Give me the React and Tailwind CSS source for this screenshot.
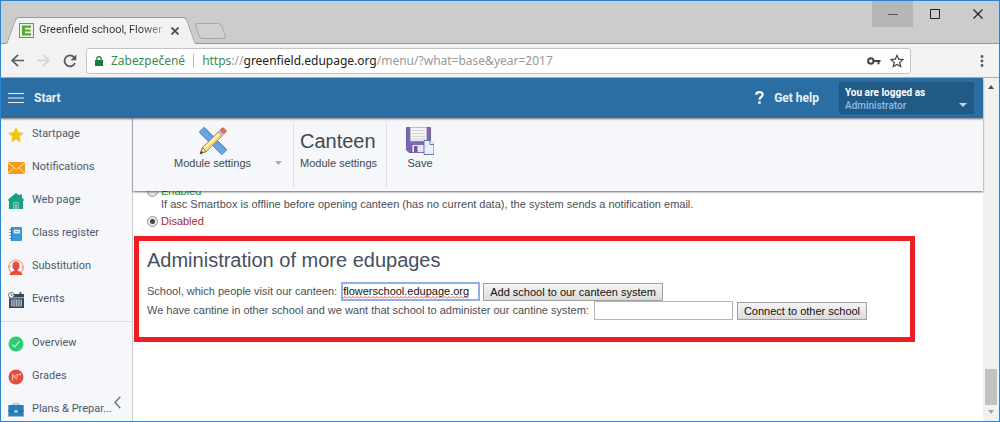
import React, { useState } from "react";

const stroke = { fill: "none", stroke: "currentColor" };

/* ---------- sidebar icons, 16 x 16 ---------- */

const StarIcon = () => (
  <svg viewBox="0 0 16 16" className="size-4 shrink-0">
    <path d="M8 0l2.3 5.3 5.7.5-4.3 3.8 1.3 5.9L8 12.4l-5 3.1 1.3-5.9L0 5.8l5.7-.5z" fill="#f1c40f" />
  </svg>
);

const MailIcon = () => (
  <svg viewBox="0 0 17 12" className="h-3 w-[17px] shrink-0">
    <rect width="17" height="12" fill="#f39c12" />
    <path d="M0 .5l8.5 7L17 .5M0 11.5l6-5.8M17 11.5l-6-5.8" fill="none" stroke="#fdebd0" strokeWidth="1" />
  </svg>
);

const HouseIcon = () => (
  <svg viewBox="0 0 16 16" className="size-4 shrink-0">
    <path d="M8 0l3.5 2.5V1.5H14v3l1.7 1.8V8H.3V6.3z" fill="#16a085" />
    <path d="M1 7h14v9H1z" fill="#16a085" />
    <path d="M5.7 16V9.5h4.6V16M7.3 16v-4.5h1.4V16" fill="none" stroke="#a2d9ce" strokeWidth=".8" />
  </svg>
);

const BookIcon = () => (
  <svg viewBox="0 0 16 16" className="size-4 shrink-0">
    <rect x="3" y="1" width="11" height="14" rx="1" fill="#3498db" />
    <path d="M3.6 1v14" stroke="#2475ad" strokeWidth=".8" />
    <path d="M1.5 3.5h2M1.5 6.5h2M1.5 9.5h2M1.5 12.5h2" stroke="#2980b9" />
    <rect x="5.8" y="3.8" width="6" height="3.6" fill="#eaf4fb" />
    <path d="M7 5.6h3.6" stroke="#3498db" strokeWidth=".8" />
  </svg>
);

const PersonIcon = () => (
  <svg viewBox="0 0 16 16" className="size-4 shrink-0">
    <path d="M2.6 13A7.2 7.2 0 1 1 13.4 13" fill="none" stroke="#e98b80" strokeWidth="1" />
    <path d="M.4 6.2l1 2.4 1.8-1.8M15.6 9.6l-1-2.2-1.8 1.6" fill="none" stroke="#e98b80" strokeWidth=".8" />
    <ellipse cx="8" cy="6.8" rx="3.5" ry="4.4" fill="#e74c3c" />
    <path d="M6.5 9h3v2.6l4 1.6.8 2.8H1.7l.8-2.8 4-1.6z" fill="#e74c3c" />
  </svg>
);

const EventsIcon = () => (
  <svg viewBox="0 0 16 16" className="size-4 shrink-0">
    <path d="M2 2h14v14H1V5z" fill="#34495e" />
    <path d="M1 5.8h15" stroke="#f5f7fa" strokeWidth=".7" />
    <path d="M12.5 0v3.5" stroke="#34495e" strokeWidth="1.6" />
    <circle cx="3.3" cy="3.3" r="2.8" fill="#f5f7fa" stroke="#5d6d7e" strokeWidth="1" />
    <path d="M3.3 1.8v1.7h1.3" fill="none" stroke="#34495e" strokeWidth=".7" />
    <path d="M3.5 8h10v6h-10zM3.5 10h10M3.5 12h10M6 8v6M8.5 8v6M11 8v6" fill="none" stroke="#d5dbe1" strokeWidth=".7" />
  </svg>
);

const CheckIcon = () => (
  <svg viewBox="0 0 16 16" className="size-4 shrink-0">
    <circle cx="8" cy="8" r="7.5" fill="#2ecc71" />
    <path d="M4.4 8.6l2.3 2.2 4.8-5.4" fill="none" stroke="#d5f5e3" strokeWidth="1.1" />
  </svg>
);

const GradesIcon = () => (
  <svg viewBox="0 0 16 16" className="size-4 shrink-0">
    <circle cx="8" cy="8" r="7.5" fill="#e74c3c" />
    <path d="M4.5 11.500V5l4 5.500M4.500 9l5.500-4-1.500 4.500M10.800 5.500h2.400M12 4.300v2.400" fill="none" stroke="#f9d3ce" strokeWidth=".8" />
  </svg>
);

const BriefcaseIcon = () => (
  <svg viewBox="0 0 16 16" className="size-4 shrink-0">
    <path d="M5 3.5V1.8h6v1.7" fill="none" stroke="#7fb3d5" strokeWidth="1" />
    <rect x=".3" y="3" width="15.4" height="11.5" rx=".6" fill="#2980b9" />
    <path d="M.3 8.4c3 1 5 1 7.7 1s4.700 0 7.700-1" fill="none" stroke="#1d5f8c" strokeWidth=".8" />
    <rect x="6.400" y="8.300" width="3.200" height="2.200" rx=".6" fill="#d4e6f1" />
  </svg>
);

/* ---------- ribbon icons ---------- */

const RulerPencilIcon = () => (
  <svg viewBox="0 0 28 28" className="size-7">
    <g transform="rotate(45 14 14)">
      <rect x="-2" y="10.500" width="32" height="7" fill="#6aa5e8" stroke="#3f78c4" strokeWidth=".8" />
      <path d="M1 10.500v3M4 10.500v2M7 10.500v3M10 10.500v2M13 10.500v3M16 10.500v2M19 10.500v3M22 10.500v2M25 10.500v3M28 10.500v2" stroke="#4c86cf" strokeWidth=".7" />
    </g>
    <g transform="rotate(-45 14 14)">
      <path d="M2 11.200h22v5.600H2l-6-2.800z" fill="#fbe38a" stroke="#8a6d2a" strokeWidth=".7" />
      <path d="M2 11.200v5.600l-6-2.800z" fill="#f0cfa0" stroke="#6b5427" strokeWidth=".6" />
      <path d="M-1.500 12.700v2.600l-2.700-1.300z" fill="#333" />
      <path d="M3 13h21" stroke="#fff3bf" strokeWidth="1.200" />
      <path d="M3 15.700h21" stroke="#efd06a" strokeWidth="1" />
      <rect x="24" y="11.200" width="2.500" height="5.600" fill="#c7ccd4" stroke="#8c929b" strokeWidth=".5" />
      <rect x="26.500" y="11.200" width="4.200" height="5.600" rx="1.500" fill="#ee6a62" stroke="#b9443f" strokeWidth=".6" />
    </g>
  </svg>
);

const FloppyIcon = () => (
  <svg viewBox="0 0 28 28" className="size-7">
    <path d="M.5.500h24v25H3L.500 23z" fill="#7d66b5" stroke="#5f4a96" strokeWidth=".8" />
    <rect x="4.500" y=".500" width="16" height="13.500" fill="#f4f4f6" stroke="#c6c4d2" strokeWidth=".6" />
    <path d="M6 3.500h13M6 6.500h13M6 9.500h13M6 12h13" stroke="#c9cbd0" strokeWidth=".8" />
    <rect x="6" y="17.500" width="13" height="8" fill="#e8e6ee" stroke="#5f4a96" strokeWidth=".6" />
    <rect x="8" y="19" width="3.500" height="6" fill="#6d57a6" />
    <path d="M18 13.500h6l4 4v10H18z" fill="#e7f0fb" stroke="#4f6f9c" strokeWidth=".9" />
    <path d="M24 13.500v4h4" fill="#fff" stroke="#4f6f9c" strokeWidth=".9" />
  </svg>
);

/* ---------- browser chrome ---------- */

function TitleBar() {
  return (
    <div className="flex h-[43px] shrink-0 items-start justify-between border-b border-[#999] bg-[#ccc]">
      <div className="flex items-end self-end pl-[10px]">
        <div className="relative z-0 -mb-px flex h-[27px] w-[180px] items-center gap-[5px] pr-3 pl-2 before:absolute before:inset-y-0 before:left-0 before:-z-10 before:w-1/2 before:-skew-x-[20deg] before:rounded-tl-sm before:border-t before:border-l before:border-[#999] before:bg-[#f2f2f2] after:absolute after:inset-y-0 after:right-0 after:-z-10 after:w-1/2 after:skew-x-[20deg] after:rounded-tr-sm after:border-t after:border-r after:border-[#999] after:bg-[#f2f2f2]">
          <span className="absolute inset-x-7 top-px bottom-0 -z-10 bg-[#f2f2f2]" />
          <svg viewBox="0 0 15 15" className="size-[15px] shrink-0">
            <rect x=".5" y=".5" width="14" height="14" fill="#e8f3e0" stroke="#4a90d9" />
            <path d="M3 2.500h9v2.300H6v1.600h5.500v2.200H6v1.700h6v2.200H3z" fill="#5aa82b" />
          </svg>
          <span className="flex-1 bg-linear-to-r from-[#333] from-80% to-[#bbb] bg-clip-text font-['Segoe_UI',Roboto,sans-serif] text-[11px] whitespace-nowrap text-transparent">
            Greenfield school, Flower
          </span>
          <button type="button" aria-label="Close tab" className="text-[#444]">
            <svg viewBox="0 0 8 8" className="size-2">
              <path d="M.5.500l7 7M7.500.500l-7 7" {...stroke} strokeWidth="1.600" />
            </svg>
          </button>
        </div>
        <button
          type="button"
          aria-label="New tab"
          className="mb-1 ml-[6px] h-4 w-[27px] skew-x-[20deg] rounded-[3px] border border-[#aaa] bg-[#d0d0d0]"
        />
      </div>
      <div className="flex h-[26px] text-[#222]">
        <button type="button" aria-label="Minimize" className="grid w-[41px] place-items-center bg-[#b6b6b6] text-[#555]">
          <svg viewBox="0 0 10 10" className="size-[10px]"><path d="M0 5.500h10" {...stroke} /></svg>
        </button>
        <button type="button" aria-label="Maximize" className="grid w-[43px] place-items-center">
          <svg viewBox="0 0 10 10" className="size-[10px]"><path d="M.5.500h9v9h-9z" {...stroke} /></svg>
        </button>
        <button type="button" aria-label="Close" className="grid w-[43px] place-items-center">
          <svg viewBox="0 0 10 10" className="size-[10px]"><path d="M.5.500l9 9M9.500.500l-9 9" {...stroke} strokeWidth="1.200" /></svg>
        </button>
      </div>
    </div>
  );
}

function AddressBar() {
  return (
    <div className="flex h-[34px] shrink-0 items-center border-b border-[#b0b0b0] bg-[#f2f2f2] pr-[15px] pl-[10px]">
      <div className="flex items-center gap-[13px] text-[#555a60]">
        <button type="button" aria-label="Back">
          <svg viewBox="0 0 13 13" className="size-[13px]"><path d="M13 6.500H1.500M7 .8L1.200 6.500 7 12.200" {...stroke} strokeWidth="1.700" /></svg>
        </button>
        <button type="button" aria-label="Forward" className="text-[#d0d0d0]">
          <svg viewBox="0 0 13 13" className="size-[13px]"><path d="M0 6.500h11.500M6 .8l5.800 5.700L6 12.200" {...stroke} strokeWidth="1.500" /></svg>
        </button>
        <button type="button" aria-label="Reload">
          <svg viewBox="0 0 14 14" className="size-[14px]">
            <path d="M12 9.200A5.500 5.500 0 1 1 11.200 3.300" {...stroke} strokeWidth="1.800" />
            <path d="M13.300.500v5.800H7.600z" fill="currentColor" />
          </svg>
        </button>
      </div>
      <div className="ml-[9px] flex h-[26px] flex-1 items-center rounded-[3px] border border-[#c4c4c4] bg-white pr-[6px] pl-2 font-['Noto_Sans',sans-serif] text-[12px]">
        <svg viewBox="0 0 8 10" className="h-[10px] w-2 text-[#188038]">
          <path d="M0 4h8v6H0z" fill="currentColor" />
          <path d="M1.800 4.500V2.800a2.200 2.200 0 0 1 4.400 0v1.700" {...stroke} strokeWidth="1.200" />
        </svg>
        <span className="ml-2 text-[#3a8a52]">Zabezpečené</span>
        <span className="mx-2 h-[14px] w-px bg-[#bbb]" />
        <span className="flex-1 whitespace-nowrap text-[#999]">
          <span className="text-[#3a8a52]">https</span>://<span className="text-[#222]">greenfield.edupage.org</span>
          /menu/?what=base&amp;year=2017
        </span>
        <button type="button" aria-label="Saved password" className="text-[#444]">
          <svg viewBox="0 0 14 8" className="h-2 w-[14px]">
            <circle cx="3.800" cy="4" r="2.700" {...stroke} strokeWidth="2" />
            <path d="M6.500 4H13.500M11.500 4v3.300" {...stroke} strokeWidth="2" />
          </svg>
        </button>
        <button type="button" aria-label="Bookmark this page" className="ml-[9px] text-[#444]">
          <svg viewBox="0 0 14 14" className="size-[14px]">
            <path d="M7 1.300l1.700 3.900 4.200.4-3.200 2.800 1 4.200L7 10.400l-3.700 2.200 1-4.200L1.100 5.600l4.200-.4z" {...stroke} strokeWidth="1.200" />
          </svg>
        </button>
      </div>
      <button type="button" aria-label="Browser menu" className="ml-[69px] text-[#555]">
        <svg viewBox="0 0 4 12" className="h-3 w-1" fill="currentColor">
          <circle cx="2" cy="1.500" r="1.400" /><circle cx="2" cy="6" r="1.400" /><circle cx="2" cy="10.500" r="1.400" />
        </svg>
      </button>
    </div>
  );
}

/* ---------- application ---------- */

function AppHeader() {
  return (
    <header className="relative z-20 flex h-10 shrink-0 items-center bg-[#2b6ea3] pr-[9px] pb-px pl-[7px] font-[Roboto,sans-serif] font-bold text-[#e8f1f8] shadow-[0_1px_2px_rgba(0,0,0,0.55)]">
      <button type="button" className="flex items-center gap-[10px] text-[12px]">
        <svg viewBox="0 0 16 12" className="h-3 w-4"><path d="M0 1.500h16M0 6h16M0 10.500h16" {...stroke} strokeWidth="1.200" /></svg>
        Start
      </button>
      <a href="#help" className="mr-5 ml-auto flex items-center gap-[10px] text-[12px]">
        <svg viewBox="0 0 9 13" className="h-[13px] w-[9px] text-white">
          <path d="M1.200 3.800C1.200 2.200 2.500 1.200 4.400 1.200S7.700 2.200 7.700 3.700C7.700 5.800 4.500 6 4.500 8.800" {...stroke} strokeWidth="2.200" />
          <rect x="3.300" y="10.400" width="2.400" height="2.400" fill="currentColor" />
        </svg>
        Get help
      </a>
      <button
        type="button"
        className="flex h-8 w-[135px] items-end justify-between rounded-[2px] border border-[#1f5580] bg-[#225a86] pr-[6px] pl-[5px] text-left text-[10px] leading-[13px]"
      >
        <span className="pb-px">
          <span className="block text-white">You are logged as</span>
          <span className="block font-medium text-[#8dbbe3]">Administrator</span>
        </span>
        <svg viewBox="0 0 8 4" className="mb-[6px] h-1 w-2"><path d="M0 0h8L4 4z" fill="#c9d6e2" /></svg>
      </button>
    </header>
  );
}

const primary = [
  ["Startpage", StarIcon],
  ["Notifications", MailIcon],
  ["Web page", HouseIcon],
  ["Class register", BookIcon],
  ["Substitution", PersonIcon],
  ["Events", EventsIcon],
];

const secondary = [
  ["Overview", CheckIcon],
  ["Grades", GradesIcon],
  ["Plans & Prepar...", BriefcaseIcon],
];

function NavList({ items }) {
  return (
    <ul>
      {items.map(([label, Icon]) => (
        <li key={label}>
          <a href="#nav" className="flex h-[33px] items-center whitespace-nowrap">
            <span className="flex w-6 shrink-0 items-center">
              <Icon />
            </span>
            {label}
          </a>
        </li>
      ))}
    </ul>
  );
}

function Sidebar() {
  return (
    <nav className="relative w-[132px] shrink-0 overflow-hidden border-r border-[#c8cbd0] bg-[#f5f7fa] font-[Roboto,sans-serif] text-[11px] text-[#4f586a]">
      <div className="pl-[7px]">
        <NavList items={primary} />
      </div>
      <hr className="mt-[5px] mb-[5px] border-[#d9dce1]" />
      <div className="pl-[7px]">
        <NavList items={secondary} />
      </div>
      <button type="button" aria-label="Collapse menu" className="absolute right-[11px] bottom-3 text-[#6b7280]">
        <svg viewBox="0 0 7 13" className="h-[13px] w-[7px]"><path d="M6.300.8L1 6.500l5.300 5.700" {...stroke} strokeWidth="1.400" /></svg>
      </button>
    </nav>
  );
}

function Ribbon() {
  return (
    <div className="relative z-10 flex h-[73px] shrink-0 bg-[#f5f7fa] py-1 text-[#3f4854] shadow-[0_1px_2px_rgba(0,0,0,0.6)]">
      <div className="flex w-[161px] items-start border-r border-[#dcdfe3] pt-[5px]">
        <button type="button" className="ml-[41px] flex flex-col items-center whitespace-nowrap">
          <RulerPencilIcon />
          <span>Module settings</span>
        </button>
        <button type="button" aria-label="More module settings" className="mt-[34px] ml-6">
          <svg viewBox="0 0 7 4" className="h-1 w-[7px]"><path d="M0 0h7L3.500 4z" fill="#aaa" /></svg>
        </button>
      </div>
      <div className="w-[93px] border-r border-[#dcdfe3] pt-[5px] pl-[6px] whitespace-nowrap">
        <h1 className="text-[20px] leading-7">Canteen</h1>
        <p>Module settings</p>
      </div>
      <button type="button" className="ml-[19px] flex flex-col items-center self-start pt-[5px]">
        <FloppyIcon />
        <span>Save</span>
      </button>
    </div>
  );
}

function Radio({ label, color, checked, onChange }) {
  return (
    <label className={`flex w-fit items-center gap-[3px] ${color}`}>
      <input
        type="radio"
        name="offline-mail"
        checked={checked}
        onChange={onChange}
        className="size-[11px] appearance-none rounded-full border border-[#999] bg-[#e6e6e6] checked:bg-[radial-gradient(circle,#444_0_2px,#e6e6e6_3px)]"
      />
      {label}
    </label>
  );
}

const buttonClass =
  "h-[18px] border border-[#a0a0a0] bg-linear-to-b from-[#f4f4f4] to-[#dcdcdc] px-[6px] leading-4 whitespace-nowrap text-[#111]";

const Squiggle = () => (
  <svg aria-hidden="true" className="pointer-events-none absolute bottom-[2px] left-[2px] h-[3px] w-[126px]">
    <defs>
      <pattern id="squiggle" width="4" height="3" patternUnits="userSpaceOnUse">
        <path d="M0 2.500l2-2 2 2" fill="none" stroke="#e33" strokeWidth=".9" />
      </pattern>
    </defs>
    <rect width="100%" height="3" fill="url(#squiggle)" />
  </svg>
);

function Content() {
  const [mode, setMode] = useState("disabled");
  const [school, setSchool] = useState("flowerschool.edupage.org");
  const [other, setOther] = useState("");
  return (
    <main className="min-h-0 flex-1 overflow-hidden bg-white pl-px">
      <div className="-mt-2 pl-[13px] leading-4">
        <Radio label="Enabled" color="text-[#1f8b2c]" checked={mode === "enabled"} onChange={() => setMode("enabled")} />
        <p className="pl-[14px] leading-[11px] whitespace-nowrap">
          If asc Smartbox is offline before opening canteen (has no current data), the system sends a notification email.
        </p>
        <div className="pt-[3px]">
          <Radio label="Disabled" color="text-[#a52a2a]" checked={mode === "disabled"} onChange={() => setMode("disabled")} />
        </div>
      </div>
      <section className="mt-[7px] mr-[68px] border-[5px] border-[#ee1c23] pt-[7px] pb-[17px] pl-2 whitespace-nowrap">
        <h2 className="text-[20px] leading-6 text-[#46505f]">Administration of more edupages</h2>
        <div className="mt-[10px] flex h-[19px] items-center">
          <label htmlFor="school">School, which people visit our canteen:</label>
          <span className="relative ml-1 flex">
            <input
              id="school"
              value={school}
              onChange={(e) => setSchool(e.target.value)}
              spellCheck={false}
              className="h-[19px] w-[139px] border-2 border-[#8fb0ea] bg-white pb-px text-[#111] outline-none"
            />
            {school && <Squiggle />}
          </span>
          <button type="button" className={`ml-[3px] ${buttonClass}`}>Add school to our canteen system</button>
        </div>
        <div className="flex h-[19px] items-center">
          <label htmlFor="other">We have cantine in other school and we want that school to administer our cantine system:</label>
          <input
            id="other"
            value={other}
            onChange={(e) => setOther(e.target.value)}
            className="ml-[5px] h-[19px] w-[139px] border border-[#b5b5b5] bg-white text-[#111] outline-none"
          />
          <button type="button" className={`ml-1 ${buttonClass}`}>Connect to other school</button>
        </div>
      </section>
    </main>
  );
}

function Scrollbar() {
  return (
    <div aria-hidden="true" className="flex w-4 shrink-0 flex-col items-center bg-[#f1f1f1] py-[7px]">
      <svg viewBox="0 0 6 4" className="h-1 w-[6px]"><path d="M0 4h6L3 0z" fill="#505050" /></svg>
      <span className="mt-auto mb-[5px] h-9 w-3 bg-[#c1c1c1]" />
      <svg viewBox="0 0 6 4" className="h-1 w-[6px]"><path d="M0 0h6L3 4z" fill="#a3a3a3" /></svg>
    </div>
  );
}

export default function App() {
  return (
    <div className="flex h-screen flex-col overflow-hidden border border-[#2b84cf] font-['Liberation_Sans',Arial,sans-serif] text-[11px] text-[#4a4f58]">
      <TitleBar />
      <AddressBar />
      <div className="flex min-h-0 flex-1">
        <div className="flex min-w-0 flex-1 flex-col">
          <AppHeader />
          <div className="flex min-h-0 flex-1">
            <Sidebar />
            <div className="flex min-w-0 flex-1 flex-col">
              <Ribbon />
              <Content />
            </div>
          </div>
        </div>
        <Scrollbar />
      </div>
    </div>
  );
}
